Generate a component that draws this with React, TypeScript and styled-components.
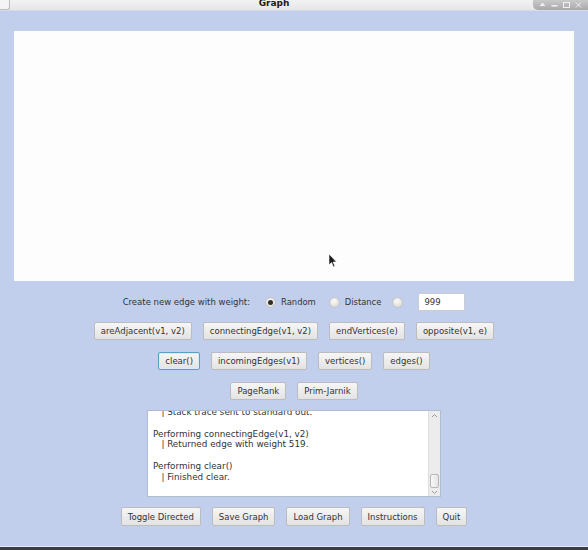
import React from "react";
import styled, { createGlobalStyle } from "styled-components";

const Global = createGlobalStyle`
  html, body { margin: 0; padding: 0; background: #c2cfec; }
  body { font-family: "DejaVu Sans", "Liberation Sans", sans-serif; }
  * { box-sizing: border-box; }
`;

const Window = styled.div`
  position: relative;
  width: 588px;
  height: 550px;
  background: #c2cfec;
  display: flex;
  flex-direction: column;
  align-items: center;
  overflow: hidden;
`;

const TitleBar = styled.div`
  position: relative;
  width: 100%;
  height: 11px;
  background: linear-gradient(#f2f2f2, #e6e6e6);
  border-bottom: 1px solid #d6dbe8;
  display: flex;
  justify-content: center;
  align-items: flex-end;
  overflow: hidden;
`;

const Title = styled.div`
  font: bold 9px "DejaVu Sans", sans-serif;
  color: #1a1a1a;
  line-height: 11px;
  margin-bottom: 1px;
  margin-left: -40px;
`;

const LeftStub = styled.div`
  position: absolute;
  left: 0;
  top: 0;
  width: 10px;
  height: 10px;
  border: 1px solid #bdbdbd;
  border-top: none;
  border-left: none;
  border-radius: 0 0 3px 0;
  background: #f4f4f4;
`;

const Controls = styled.div`
  position: absolute;
  right: 0;
  top: 0;
  width: 55px;
  height: 10px;
  background: linear-gradient(#c9c9c9, #a9a9a9);
  border-radius: 0 0 0 5px;
  display: flex;
  align-items: center;
  justify-content: space-around;
  padding: 0 4px;
`;

const Canvas = styled.div`
  margin-top: 20px;
  width: 560px;
  height: 250px;
  background: #fdfdfe;
`;

const Row = styled.div<{ $mt: number; $gap?: number }>`
  margin-top: ${(p) => p.$mt}px;
  display: flex;
  justify-content: center;
  align-items: center;
  gap: ${(p) => p.$gap ?? 11}px;
`;

const Label = styled.span`
  font-size: 8.5px;
  color: #333;
  white-space: nowrap;
`;

const RadioWrap = styled.label<{ $ml: number }>`
  display: flex;
  align-items: center;
  gap: 5px;
  margin-left: ${(p) => p.$ml}px;
  font-size: 8.4px;
  color: #333;
`;

const RadioDot = styled.span<{ $on?: boolean }>`
  width: 11px;
  height: 11px;
  border-radius: 50%;
  background: radial-gradient(circle at 45% 35%, #fbfbfb, #dcdcdc 75%);
  border: 1px solid #c4c4c4;
  display: flex;
  align-items: center;
  justify-content: center;
  &::after {
    content: "";
    width: 5px;
    height: 5px;
    border-radius: 50%;
    background: ${(p) => (p.$on ? "#2e2e2e" : "transparent")};
  }
`;

const Field = styled.div`
  margin-left: 15px;
  width: 47px;
  height: 18px;
  background: #fff;
  border: 1px solid #c9ccd3;
  font-size: 8.5px;
  color: #333;
  display: flex;
  align-items: center;
  padding-left: 5px;
`;

const Button = styled.button<{ $focus?: boolean; $h?: number }>`
  height: ${(p) => p.$h ?? 18}px;
  padding: 0 6px;
  font-family: "DejaVu Sans", sans-serif;
  font-size: 8.5px;
  color: #333;
  background: linear-gradient(#f6f6f6, #e3e3e3);
  border: 1px solid ${(p) => (p.$focus ? "#5b9fc6" : "#bcbcbc")};
  box-shadow: ${(p) => (p.$focus ? "inset 0 0 0 1px #d6ecf7" : "none")};
  border-radius: 2px;
  white-space: nowrap;
  cursor: default;
`;

const LogBox = styled.div`
  margin-top: 10px;
  width: 294px;
  height: 87px;
  background: #fff;
  border: 1px solid #b3bccf;
  display: flex;
`;

const LogText = styled.div`
  flex: 1;
  overflow: hidden;
  padding-left: 5px;
  font-size: 8.8px;
  color: #333;
  line-height: 10.8px;
  white-space: pre;
`;

const LogInner = styled.div`
  margin-top: -4px;
`;

const ScrollBar = styled.div`
  width: 12px;
  background: #ececec;
  border-left: 1px solid #dedede;
  display: flex;
  flex-direction: column;
  align-items: center;
  justify-content: space-between;
  padding: 2px 0 1px;
`;

const Thumb = styled.div`
  width: 9px;
  height: 14px;
  border: 1px solid #b8b8b8;
  border-radius: 2px;
  background: linear-gradient(90deg, #f8f8f8, #e4e4e4);
  margin-top: auto;
  margin-bottom: 2px;
`;

const Footer = styled.div`
  margin-top: auto;
  width: 100%;
  height: 4px;
  border-top: 1px solid #e6eaf4;
  background: #3c3f46;
`;

const Cursor = styled.svg`
  position: absolute;
  left: 328px;
  top: 253px;
`;

const Arrow = ({ up }: { up?: boolean }) => (
  <svg width="7" height="5" viewBox="0 0 7 5">
    <path
      d={up ? "M1 4 L3.5 1.5 L6 4" : "M1 1 L3.5 3.5 L6 1"}
      fill="none"
      stroke="#9a9a9a"
      strokeWidth="1"
    />
  </svg>
);

const lines = [
  "   | Stack trace sent to standard out.",
  "",
  "Performing connectingEdge(v1, v2)",
  "   | Returned edge with weight 519.",
  "",
  "Performing clear()",
  "   | Finished clear.",
];

export default function App() {
  return (
    <>
      <Global />
      <Window>
        <TitleBar>
          <LeftStub />
          <Title>Graph</Title>
          <Controls>
            <svg width="7" height="6" viewBox="0 0 7 6"><path d="M3.5 0.5 L6.5 4 L0.5 4 Z" fill="#f0f0f0" /></svg>
            <svg width="7" height="6" viewBox="0 0 7 6"><rect x="0.5" y="3" width="6" height="1.5" fill="#f0f0f0" /></svg>
            <svg width="7" height="6" viewBox="0 0 7 6"><rect x="0.5" y="0.5" width="6" height="5" fill="none" stroke="#f0f0f0" /></svg>
            <svg width="7" height="6" viewBox="0 0 7 6"><path d="M1 0.5 L6 5.5 M6 0.5 L1 5.5" stroke="#f0f0f0" /></svg>
          </Controls>
        </TitleBar>
        <Canvas />
        <Row $mt={12} $gap={0}>
          <Label>Create new edge with weight:</Label>
          <RadioWrap $ml={15}>
            <RadioDot $on />
            Random
          </RadioWrap>
          <RadioWrap $ml={13}>
            <RadioDot />
            Distance
          </RadioWrap>
          <RadioWrap $ml={11}>
            <RadioDot />
          </RadioWrap>
          <Field>999</Field>
        </Row>
        <Row $mt={11}>
          <Button>areAdjacent(v1, v2)</Button>
          <Button>connectingEdge(v1, v2)</Button>
          <Button>endVertices(e)</Button>
          <Button>opposite(v1, e)</Button>
        </Row>
        <Row $mt={12}>
          <Button $focus>clear()</Button>
          <Button>incomingEdges(v1)</Button>
          <Button>vertices()</Button>
          <Button>edges()</Button>
        </Row>
        <Row $mt={12}>
          <Button>PageRank</Button>
          <Button>Prim-Jarnik</Button>
        </Row>
        <LogBox>
          <LogText>
            <LogInner>
              {lines.map((l, i) => (
                <div key={i}>{l || " "}</div>
              ))}
            </LogInner>
          </LogText>
          <ScrollBar>
            <Arrow up />
            <Thumb />
            <Arrow />
          </ScrollBar>
        </LogBox>
        <Row $mt={10}>
          <Button $h={19}>Toggle Directed</Button>
          <Button $h={19}>Save Graph</Button>
          <Button $h={19}>Load Graph</Button>
          <Button $h={19}>Instructions</Button>
          <Button $h={19}>Quit</Button>
        </Row>
        <Footer />
        <Cursor width="10" height="15" viewBox="0 0 10 15">
          <path d="M1 1 L1 12 L3.5 9.5 L5.5 14 L7 13.3 L5 9 L8.5 9 Z" fill="#1a1a1a" stroke="#fff" strokeWidth="0.6" />
        </Cursor>
      </Window>
    </>
  );
}
